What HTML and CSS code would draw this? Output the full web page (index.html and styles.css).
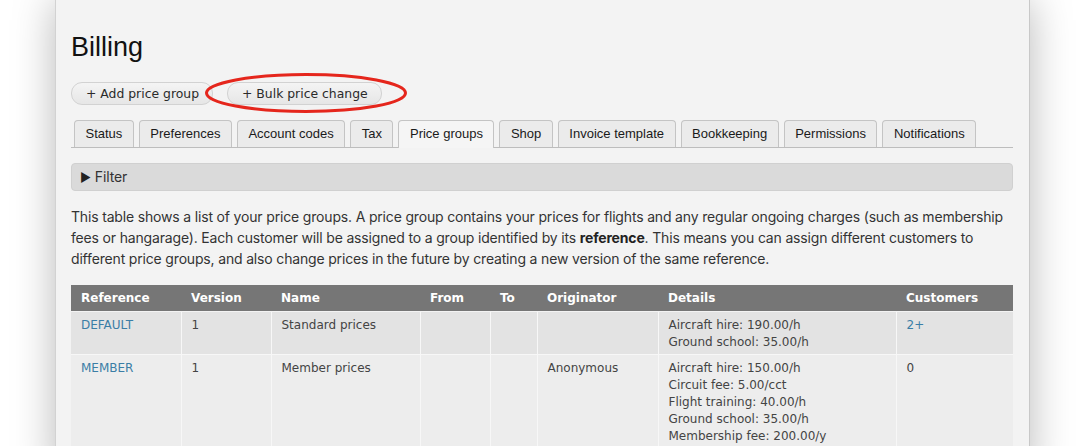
FILE: index.html
```html
<!DOCTYPE html>
<html>
<head>
<meta charset="utf-8">
<link rel="stylesheet" href="styles.css">
</head>
<body>
<div class="window">
  <h1 class="title">Billing</h1>
  <div class="actions">
    <button class="btn">+ Add price group</button>
    <button class="btn">+ Bulk price change</button>
    <svg class="annot" width="204" height="42" viewBox="0 0 204 42"><ellipse cx="102" cy="21" rx="99.5" ry="18.5" fill="none" stroke="#e5261c" stroke-width="3"/></svg>
  </div>
  <ul class="tabs">
    <li class="tab">Status</li>
    <li class="tab">Preferences</li>
    <li class="tab">Account codes</li>
    <li class="tab">Tax</li>
    <li class="tab active">Price groups</li>
    <li class="tab">Shop</li>
    <li class="tab">Invoice template</li>
    <li class="tab">Bookkeeping</li>
    <li class="tab">Permissions</li>
    <li class="tab">Notifications</li>
  </ul>
  <div class="filter"><span class="tri">&#9654;</span> Filter</div>
  <p class="intro">This table shows a list of your price groups. A price group contains your prices for flights and any regular ongoing charges (such as membership fees or hangarage). Each customer will be assigned to a group identified by its <b>reference</b>. This means you can assign different customers to different price groups, and also change prices in the future by creating a new version of the same reference.</p>
  <table class="grid">
    <colgroup>
      <col class="c-ref"><col class="c-ver"><col class="c-name"><col class="c-from"><col class="c-to"><col class="c-orig"><col class="c-det"><col class="c-cust">
    </colgroup>
    <thead>
      <tr><th>Reference</th><th>Version</th><th>Name</th><th>From</th><th>To</th><th>Originator</th><th>Details</th><th>Customers</th></tr>
    </thead>
    <tbody>
      <tr class="odd">
        <td><a class="link">DEFAULT</a></td><td>1</td><td>Standard prices</td><td></td><td></td><td></td>
        <td>Aircraft hire: 190.00/h<br>Ground school: 35.00/h</td>
        <td><a class="link">2+</a></td>
      </tr>
      <tr class="even">
        <td><a class="link">MEMBER</a></td><td>1</td><td>Member prices</td><td></td><td></td><td>Anonymous</td>
        <td>Aircraft hire: 150.00/h<br>Circuit fee: 5.00/cct<br>Flight training: 40.00/h<br>Ground school: 35.00/h<br>Membership fee: 200.00/y</td>
        <td>0</td>
      </tr>
    </tbody>
  </table>
</div>
</body>
</html>
```

FILE: styles.css
```css
html, body {
  margin: 0;
  padding: 0;
  background: #ffffff;
  height: 446px;
  overflow: hidden;
}

.window {
  margin-left: 55px;
  width: 942px;
  height: 446px;
  padding: 32px 16px 0 15px;
  background: #f3f3f3;
  border-left: 1px solid #d2d2d2;
  border-right: 1px solid #c8c8c8;
  box-shadow: 0 0 40px rgba(0, 0, 0, 0.28);
  box-sizing: content-box;
  font-family: "Liberation Sans", Arial, sans-serif;
  color: #222;
}

.title {
  margin: 0;
  font-size: 27px;
  line-height: 31px;
  font-weight: normal;
  color: #111;
}

.actions {
  position: relative;
  display: flex;
  gap: 14px;
  margin-top: 19px;
}

.btn {
  height: 23px;
  padding: 0 13px 0 14px;
  border: 1px solid #d2d2d2;
  border-radius: 11px;
  background: linear-gradient(#f4f4f4, #e6e6e6);
  font-family: "DejaVu Sans", Verdana, sans-serif;
  font-size: 12.4px;
  color: #2a2a2a;
  line-height: 21px;
}

.annot {
  position: absolute;
  left: 133px;
  top: -10px;
}

.tabs {
  list-style: none;
  margin: 15px 0 0 0;
  padding: 0 0 0 3px;
  display: flex;
  gap: 5px;
  border-bottom: 1px solid #bdbdbd;
}

.tab {
  height: 26px;
  line-height: 25px;
  padding: 0 10.5px;
  border: 1px solid #c4c4c4;
  border-bottom: none;
  border-radius: 4px 4px 0 0;
  background: #ebebeb;
  font-size: 13px;
  color: #1a1a1a;
  margin-bottom: -1px;
}

.tab.active {
  background: #f5f5f5;
  height: 27px;
}

.filter {
  margin-top: 15px;
  height: 26px;
  line-height: 26px;
  padding-left: 8px;
  background: #dadada;
  border: 1px solid #d0d0d0;
  border-radius: 4px;
  font-family: Inter, "Noto Sans", sans-serif;
  font-size: 14px;
  letter-spacing: -0.1px;
  color: #333;
}

.tri {
  font-size: 12px;
  color: #222;
}

.intro {
  margin: 15px 0 0 0;
  font-family: Inter, "Noto Sans", sans-serif;
  font-size: 14px;
  letter-spacing: -0.17px;
  line-height: 21px;
  color: #333;
}

.intro b {
  font-weight: 700;
  color: #222;
}

.grid {
  margin-top: 16px;
  width: 942px;
  border-collapse: collapse;
  table-layout: fixed;
  font-family: "DejaVu Sans", Verdana, sans-serif;
  font-size: 12px;
  color: #444;
}

.c-ref { width: 110px; }
.c-ver { width: 90px; }
.c-name { width: 149px; }
.c-from { width: 70px; }
.c-to { width: 47px; }
.c-orig { width: 121px; }
.c-det { width: 238px; }
.c-cust { width: 117px; }

.grid th {
  background: #767676;
  color: #fff;
  text-align: left;
  font-weight: bold;
  height: 26px;
  padding: 0 10px;
  border-bottom: 1px solid #f3f3f3;
}

.grid td {
  vertical-align: top;
  padding: 5px 10px 3px;
  line-height: 17px;
  border: 1px solid #f7f7f7;
  border-top: none;
}

.grid td:first-child { border-left: none; }
.grid td:last-child { border-right: none; }

.odd td { background: #e3e3e3; }
.even td { background: #ededed; }

.link {
  color: #3b7ea6;
  text-decoration: none;
}
```
